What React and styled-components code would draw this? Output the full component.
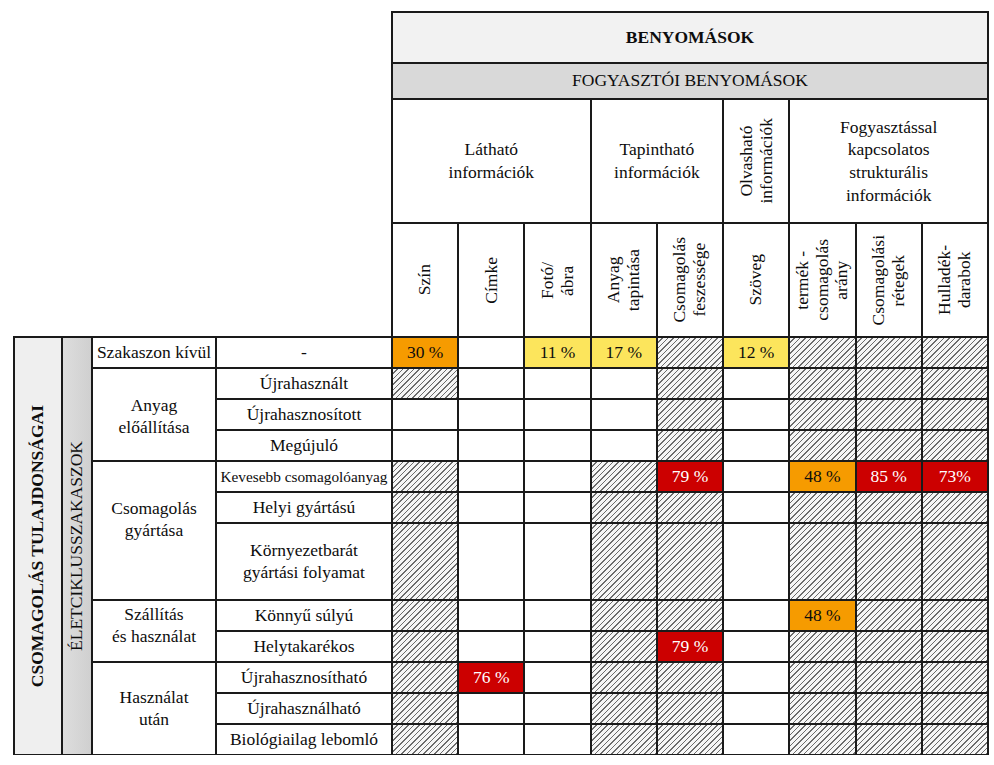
import React from 'react';
import styled, { createGlobalStyle, css } from 'styled-components';

const GlobalStyle = createGlobalStyle`
  body {
    margin: 0;
    background: #fff;
    font-family: "Liberation Serif", "Times New Roman", serif;
    color: #0d0d0d;
  }
`;

const attributes = [
  ['Szín'],
  ['Címke'],
  ['Fotó/', 'ábra'],
  ['Anyag', 'tapintása'],
  ['Csomagolás', 'feszessége'],
  ['Szöveg'],
  ['termék -', 'csomagolás', 'arány'],
  ['Csomagolási', 'rétegek'],
  ['Hulladék-', 'darabok'],
];

// each value: 'h' = hatched (not relevant), '' = empty, 'tone:text'
const stages = [
  {
    label: ['Szakaszon kívül'],
    items: [{ label: ['-'], values: ['orange:30 %', '', 'yellow:11 %', 'yellow:17 %', 'h', 'yellow:12 %', 'h', 'h', 'h'] }],
  },
  {
    label: ['Anyag', 'előállítása'],
    shift: -4,
    items: [
      { label: ['Újrahasznált'], values: ['h', '', '', '', 'h', '', 'h', 'h', 'h'] },
      { label: ['Újrahasznosított'], values: ['', '', '', '', 'h', '', 'h', 'h', 'h'] },
      { label: ['Megújuló'], values: ['', '', '', '', 'h', '', 'h', 'h', 'h'] },
    ],
  },
  {
    label: ['Csomagolás', 'gyártása'],
    shift: 22,
    items: [
      { label: ['Kevesebb csomagolóanyag'], small: true, values: ['h', '', '', 'h', 'red:79 %', '', 'orange:48 %', 'red:85 %', 'red:73%'] },
      { label: ['Helyi gyártású'], values: ['h', '', '', 'h', 'h', '', 'h', 'h', 'h'] },
      { label: ['Környezetbarát', 'gyártási folyamat'], values: ['h', '', '', 'h', 'h', '', 'h', 'h', 'h'] },
    ],
  },
  {
    label: ['Szállítás', 'és használat'],
    shift: 10,
    items: [
      { label: ['Könnyű súlyú'], values: ['h', '', '', 'h', 'h', '', 'orange:48 %', 'h', 'h'] },
      { label: ['Helytakarékos'], values: ['h', '', '', 'h', 'red:79 %', '', 'h', 'h', 'h'] },
    ],
  },
  {
    label: ['Használat', 'után'],
    items: [
      { label: ['Újrahasznosítható'], values: ['h', 'red:76 %', '', 'h', 'h', '', 'h', 'h', 'h'] },
      { label: ['Újrahasználható'], values: ['h', '', '', 'h', 'h', '', 'h', 'h', 'h'] },
      { label: ['Biológiailag lebomló'], values: ['h', '', '', 'h', 'h', '', 'h', 'h', 'h'] },
    ],
  },
];

const tones = {
  h: 'repeating-linear-gradient(135deg, #6c6c6c 0 1.1px, #f6f6f6 1.1px 3.9px)',
  orange: '#f69b00',
  yellow: '#fce55c',
  red: '#cc0000',
  blank: '#fff',
};

const lines = (arr) =>
  arr.map((t, i) => (
    <React.Fragment key={i}>
      {i > 0 && <br />}
      {t}
    </React.Fragment>
  ));

const App = () => {
  let row = 5;
  const left = [];
  const values = [];

  stages.forEach((stage, si) => {
    const start = row;
    stage.items.forEach((item, ii) => {
      left.push(
        <ItemCell key={`i${si}-${ii}`} $col={4} $row={row} $small={item.small}>
          <span>{lines(item.label)}</span>
        </ItemCell>
      );
      item.values.forEach((v, vi) => {
        const [tone, text] = v === 'h' ? ['h', ''] : v === '' ? ['blank', ''] : v.split(':');
        values.push(
          <ValueCell key={`v${row}-${vi}`} $col={5 + vi} $row={row} $tone={tone}>
            {text}
          </ValueCell>
        );
      });
      row += 1;
    });
    left.push(
      <StageCell key={`s${si}`} $col={3} $row={start} $h={row - start} $shift={stage.shift}>
        <span>{lines(stage.label)}</span>
      </StageCell>
    );
  });

  return (
    <>
      <GlobalStyle />
      <Sheet>
        <TitleCell $col={5} $row={1} $w={9}>BENYOMÁSOK</TitleCell>
        <BandCell $col={5} $row={2} $w={9}>FOGYASZTÓI BENYOMÁSOK</BandCell>

        <GroupCell $col={5} $row={3} $w={3}>
          <span>Látható<br />információk</span>
        </GroupCell>
        <GroupCell $col={8} $row={3} $w={2}>
          <span>Tapintható<br />információk</span>
        </GroupCell>
        <GroupCell $col={10} $row={3}>
          <Vertical>Olvasható<br />információk</Vertical>
        </GroupCell>
        <GroupCell $col={11} $row={3} $w={3}>
          <span>Fogyasztással<br />kapcsolatos<br />strukturális<br />információk</span>
        </GroupCell>

        {attributes.map((a, i) => (
          <AttrCell key={i} $col={5 + i} $row={4}>
            <Vertical>{lines(a)}</Vertical>
          </AttrCell>
        ))}

        <SideCell $col={1} $row={5} $h={12} $bg="#efefef" $bold>
          <Vertical>CSOMAGOLÁS TULAJDONSÁGAI</Vertical>
        </SideCell>
        <SideCell $col={2} $row={5} $h={12} $bg="linear-gradient(90deg, #dedede, #cfcfcf)">
          <Vertical>ÉLETCIKLUSSZAKASZOK</Vertical>
        </SideCell>

        {left}
        {values}
      </Sheet>
    </>
  );
};

export default App;

const Sheet = styled.div`
  display: grid;
  width: 974px;
  margin: 12px 0 0 14px;
  grid-template-columns: 48px 30px 124px 176px repeat(9, 1fr);
  grid-template-rows: 51px 36px 124px 114px repeat(6, 31px) 77px repeat(5, 31px);
  font-size: 17.5px;
  line-height: 1.25;
`;

const cell = css`
  grid-column: ${(p) => p.$col} / span ${(p) => p.$w || 1};
  grid-row: ${(p) => p.$row} / span ${(p) => p.$h || 1};
  display: flex;
  align-items: center;
  justify-content: center;
  text-align: center;
  min-width: 0;
  outline: 2px solid #1a1a1a;
  outline-offset: -1px;
  background: #fff;
`;

const Vertical = styled.span`
  writing-mode: vertical-rl;
  transform: rotate(180deg);
  line-height: 1.12;
  white-space: nowrap;
`;

const TitleCell = styled.div`
  ${cell}
  background: #f2f2f2;
  font-weight: bold;
`;

const BandCell = styled.div`
  ${cell}
  background: #d9d9d9;
`;

const GroupCell = styled.div`
  ${cell}
  line-height: 1.3;
`;

const AttrCell = styled.div`
  ${cell}
`;

const SideCell = styled.div`
  ${cell}
  background: ${(p) => p.$bg};
  font-weight: ${(p) => (p.$bold ? 'bold' : 'normal')};
`;

const StageCell = styled.div`
  ${cell}
  padding-bottom: ${(p) => Math.max(p.$shift || 0, 0)}px;
  padding-top: ${(p) => Math.max(-(p.$shift || 0), 0)}px;
`;

const ItemCell = styled.div`
  ${cell}
  font-size: ${(p) => (p.$small ? '15.3px' : '17.5px')};
  white-space: nowrap;
`;

const ValueCell = styled.div`
  ${cell}
  background: ${(p) => tones[p.$tone]};
  color: ${(p) => (p.$tone === 'red' ? '#fff' : '#0d0d0d')};
`;
